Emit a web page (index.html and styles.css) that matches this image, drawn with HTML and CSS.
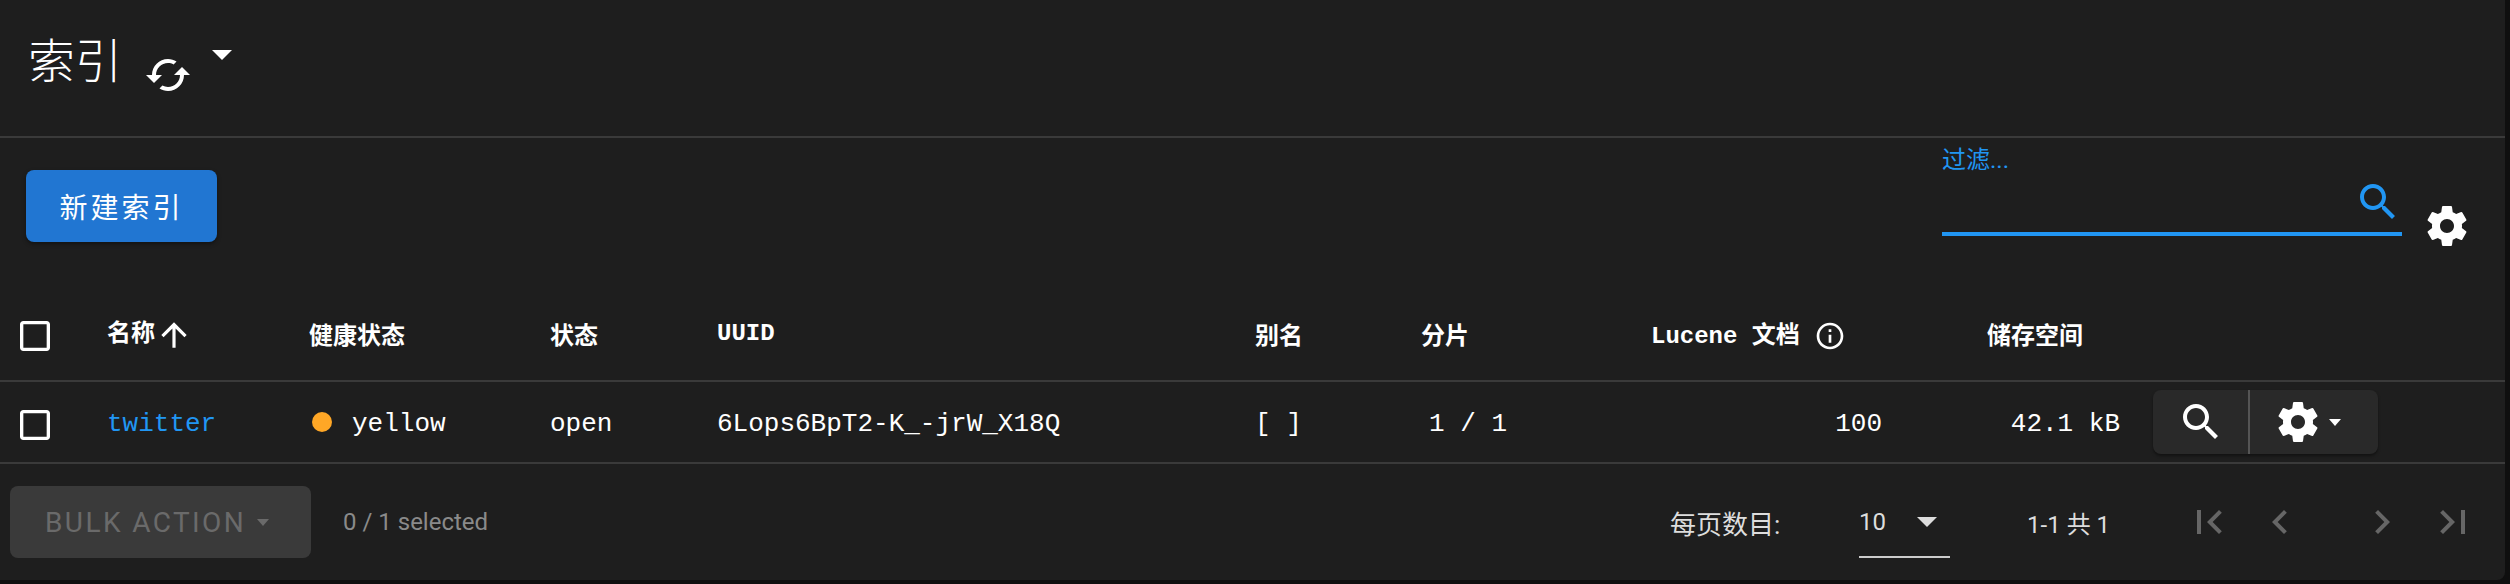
FILE: index.html
```html
<!DOCTYPE html>
<html lang="zh">
   <head>
      <meta charset="UTF-8">
      <title>索引</title>
      <link rel="stylesheet" href="styles.css">
   </head>
   <body>
      <div class="card">
         <header class="title-bar">
            <h1>索引</h1>
            <svg class="icon icon-refresh" viewBox="0 0 24 24"><path d="M19 8l-4 4h3c0 3.31-2.69 6-6 6-1.01 0-1.97-.25-2.8-.7l-1.46 1.46C8.97 19.54 10.43 20 12 20c4.42 0 8-3.58 8-8h3l-4-4zM6 12c0-3.31 2.69-6 6-6 1.01 0 1.97.25 2.8.7l1.46-1.46C15.03 4.46 13.57 4 12 4c-4.42 0-8 3.58-8 8H1l4 4 4-4H6z"/></svg>
            <span class="caret caret-title"></span>
         </header>

         <div class="toolbar">
            <button class="btn-primary">新建索引</button>
            <div class="filter">
               <label>过滤...</label>
               <div class="filter-input">
                  <svg class="icon" viewBox="0 0 24 24"><path d="M15.5 14h-.79l-.28-.27C15.41 12.59 16 11.11 16 9.5 16 5.91 13.09 3 9.5 3S3 5.91 3 9.5 5.91 16 9.5 16c1.61 0 3.09-.59 4.23-1.57l.27.28v.79l5 4.99L20.49 19l-4.99-5zm-6 0C7.01 14 5 11.99 5 9.5S7.01 5 9.5 5 14 7.01 14 9.5 11.99 14 9.5 14z"/></svg>
               </div>
            </div>
            <svg class="icon icon-settings" viewBox="0 0 24 24"><path d="M19.43 12.98c.04-.32.07-.64.07-.98s-.03-.66-.07-.98l2.11-1.65c.19-.15.24-.42.12-.64l-2-3.46c-.12-.22-.39-.3-.61-.22l-2.49 1c-.52-.4-1.08-.73-1.69-.98l-.38-2.65C14.46 2.18 14.25 2 14 2h-4c-.25 0-.46.18-.49.42l-.38 2.65c-.61.25-1.17.59-1.69.98l-2.49-1c-.23-.09-.49 0-.61.22l-2 3.46c-.13.22-.07.49.12.64l2.11 1.65c-.04.32-.07.65-.07.98s.03.66.07.98l-2.11 1.65c-.19.15-.24.42-.12.64l2 3.46c.12.22.39.3.61.22l2.49-1c.52.4 1.08.73 1.69.98l.38 2.65c.03.24.24.42.49.42h4c.25 0 .46-.18.49-.42l.38-2.65c.61-.25 1.17-.59 1.69-.98l2.49 1c.23.09.49 0 .61-.22l2-3.46c.12-.22.07-.49-.12-.64l-2.11-1.65zM12 15.5c-1.93 0-3.5-1.57-3.5-3.5s1.57-3.5 3.5-3.5 3.5 1.57 3.5 3.5-1.57 3.5-3.5 3.5z"/></svg>
         </div>

         <table class="index-table">
            <colgroup>
               <col class="col-check">
               <col class="col-name">
               <col class="col-health">
               <col class="col-state">
               <col class="col-uuid">
               <col class="col-alias">
               <col class="col-shards">
               <col class="col-docs">
               <col class="col-size">
               <col>
            </colgroup>
            <thead>
               <tr>
                  <th class="cell-check"><svg class="icon-check" viewBox="0 0 24 24"><path d="M19 5v14H5V5h14m0-2H5c-1.1 0-2 .9-2 2v14c0 1.1.9 2 2 2h14c1.1 0 2-.9 2-2V5c0-1.1-.9-2-2-2z"/></svg></th>
                  <th>名称<svg class="icon-sort" viewBox="0 0 24 24"><path d="M4 12l1.41 1.41L11 7.83V20h2V7.83l5.58 5.59L20 12l-8-8-8 8z"/></svg></th>
                  <th>健康状态</th>
                  <th>状态</th>
                  <th>UUID</th>
                  <th>别名</th>
                  <th>分片</th>
                  <th>Lucene 文档<svg class="icon-info" viewBox="0 0 24 24"><path d="M11 7h2v2h-2zm0 4h2v6h-2zm1-9C6.48 2 2 6.48 2 12s4.48 10 10 10 10-4.48 10-10S17.52 2 12 2zm0 18c-4.41 0-8-3.59-8-8s3.59-8 8-8 8 3.59 8 8-3.59 8-8 8z"/></svg></th>
                  <th>储存空间</th>
                  <th></th>
               </tr>
            </thead>
            <tbody>
               <tr>
                  <td class="cell-check"><svg class="icon-check" viewBox="0 0 24 24"><path d="M19 5v14H5V5h14m0-2H5c-1.1 0-2 .9-2 2v14c0 1.1.9 2 2 2h14c1.1 0 2-.9 2-2V5c0-1.1-.9-2-2-2z"/></svg></td>
                  <td><a href="#">twitter</a></td>
                  <td><span class="dot"></span>yellow</td>
                  <td>open</td>
                  <td>6Lops6BpT2-K_-jrW_X18Q</td>
                  <td class="cell-alias">[ ]</td>
                  <td class="cell-shards">1 / 1</td>
                  <td class="cell-docs">100</td>
                  <td class="cell-size">42.1 kB</td>
                  <td class="cell-actions">
                     <div class="btn-group">
                        <span class="btn-part part-search"><svg class="icon" viewBox="0 0 24 24"><path d="M15.5 14h-.79l-.28-.27C15.41 12.59 16 11.11 16 9.5 16 5.91 13.09 3 9.5 3S3 5.91 3 9.5 5.91 16 9.5 16c1.61 0 3.09-.59 4.23-1.57l.27.28v.79l5 4.99L20.49 19l-4.99-5zm-6 0C7.01 14 5 11.99 5 9.5S7.01 5 9.5 5 14 7.01 14 9.5 11.99 14 9.5 14z"/></svg></span>
                        <span class="btn-part part-settings"><svg class="icon" viewBox="0 0 24 24"><path d="M19.43 12.98c.04-.32.07-.64.07-.98s-.03-.66-.07-.98l2.11-1.65c.19-.15.24-.42.12-.64l-2-3.46c-.12-.22-.39-.3-.61-.22l-2.49 1c-.52-.4-1.08-.73-1.69-.98l-.38-2.65C14.46 2.18 14.25 2 14 2h-4c-.25 0-.46.18-.49.42l-.38 2.65c-.61.25-1.17.59-1.69.98l-2.49-1c-.23-.09-.49 0-.61.22l-2 3.46c-.13.22-.07.49.12.64l2.11 1.65c-.04.32-.07.65-.07.98s.03.66.07.98l-2.11 1.65c-.19.15-.24.42-.12.64l2 3.46c.12.22.39.3.61.22l2.49-1c.52.4 1.08.73 1.69.98l.38 2.65c.03.24.24.42.49.42h4c.25 0 .46-.18.49-.42l.38-2.65c.61-.25 1.17-.59 1.69-.98l2.49 1c.23.09.49 0 .61-.22l2-3.46c.12-.22.07-.49-.12-.64l-2.11-1.65zM12 15.5c-1.93 0-3.5-1.57-3.5-3.5s1.57-3.5 3.5-3.5 3.5 1.57 3.5 3.5-1.57 3.5-3.5 3.5z"/></svg><span class="caret caret-small"></span></span>
                     </div>
                  </td>
               </tr>
            </tbody>
         </table>

         <footer class="table-footer">
            <button class="btn-bulk">BULK ACTION<span class="caret caret-bulk"></span></button>
            <span class="selected">0 / 1 selected</span>
            <span class="per-page">每页数目:</span>
            <div class="page-select"><span>10</span><span class="caret caret-select"></span></div>
            <span class="page-range">1-1 共 1</span>
            <div class="pager">
               <svg class="icon" viewBox="0 0 24 24"><path d="M18.41 16.59L13.82 12l4.59-4.59L17 6l-6 6 6 6zM6 6h2v12H6z"/></svg>
               <svg class="icon" viewBox="0 0 24 24"><path d="M15.41 7.41L14 6l-6 6 6 6 1.41-1.41L10.83 12z"/></svg>
               <svg class="icon pager-next" viewBox="0 0 24 24"><path d="M10 6L8.59 7.41 13.17 12l-4.58 4.59L10 18l6-6z"/></svg>
               <svg class="icon" viewBox="0 0 24 24"><path d="M5.59 7.41L10.18 12l-4.59 4.59L7 18l6-6-6-6zM16 6h2v12h-2z"/></svg>
            </div>
         </footer>
      </div>
   </body>
</html>
```

FILE: styles.css
```css
body {
margin: 0;
background-color: #0f0f0f;
color: #fff;
font-family: Roboto, "Noto Sans CJK SC", sans-serif;
}
.card {
width: 2505px;
height: 580px;
background-color: #1e1e1e;
border-radius: 0 0 8px 0;
overflow: hidden;
}
.icon {
width: 48px;
height: 48px;
fill: currentColor;
flex: none;
display: block;
}
.caret {
display: block;
width: 0;
height: 0;
border-style: solid;
border-color: currentColor transparent transparent transparent;
}

/* title */
.title-bar {
display: flex;
align-items: flex-start;
height: 136px;
padding-left: 28px;
border-bottom: 2px solid #3a3a3a;
}
h1 {
margin: 30px 0 0 0;
font-size: 47px;
line-height: 64px;
font-weight: 300;
}
.icon-refresh {
margin: 51px 0 0 22px;
}
.caret-title {
margin: 50px 0 0 20px;
border-width: 10px 10px 0 10px;
}

/* toolbar */
.toolbar {
display: flex;
align-items: flex-start;
height: 154px;
padding-left: 26px;
}
.btn-primary {
margin-top: 32px;
width: 191px;
height: 72px;
border: none;
border-radius: 8px;
background-color: #2176d2;
color: #fff;
font-family: "Noto Sans CJK SC", sans-serif;
font-size: 28px;
letter-spacing: 3px;
box-shadow: 0 2px 4px rgba(0, 0, 0, 0.4);
}
.filter {
width: 460px;
margin: 8px 0 0 1725px;
color: #2196f3;
}
.filter label {
display: block;
font-size: 24px;
line-height: 28px;
}
.filter-input {
display: flex;
justify-content: flex-end;
height: 54px;
padding-top: 4px;
border-bottom: 4px solid #2196f3;
}
.icon-settings {
margin: 64px 0 0 21px;
}

/* table */
.index-table {
width: 100%;
table-layout: fixed;
border-collapse: collapse;
font-family: "Liberation Mono", "Noto Sans CJK SC", monospace;
}
.col-check { width: 107px; }
.col-name { width: 202px; }
.col-health { width: 241px; }
.col-state { width: 167px; }
.col-uuid { width: 538px; }
.col-alias { width: 166px; }
.col-shards { width: 230px; }
.col-docs { width: 336px; }
.col-size { width: 166px; }
th, td {
padding: 0;
box-sizing: border-box;
text-align: left;
white-space: nowrap;
border-bottom: 2px solid #3a3a3a;
}
th {
height: 89px;
padding-bottom: 5px;
font-size: 24px;
font-weight: bold;
}
td {
height: 82px;
padding-top: 4px;
font-size: 26px;
}
th.cell-check {
padding: 0 0 0 15px;
}
td.cell-check {
padding: 5px 0 0 15px;
}
.icon-check {
display: block;
width: 40px;
height: 40px;
fill: #fff;
}
.icon-sort {
width: 38px;
height: 38px;
fill: #fff;
vertical-align: middle;
}
.icon-info {
width: 32px;
height: 32px;
margin-left: 14px;
fill: #fff;
vertical-align: middle;
}
td a {
color: #2196f3;
text-decoration: none;
}
.dot {
display: inline-block;
width: 20px;
height: 20px;
margin: 0 20px 0 3px;
border-radius: 50%;
background-color: #ffa726;
vertical-align: -1px;
}
td.cell-alias {
padding-left: 0;
}
.cell-shards {
padding-left: 8px;
}
.cell-docs {
padding-right: 105px;
text-align: right;
}
.cell-size {
padding-right: 33px;
text-align: right;
}
td.cell-actions {
padding: 0;
}
.btn-group {
display: flex;
width: 225px;
height: 64px;
border-radius: 8px;
background-color: #292929;
box-shadow: 0 2px 3px rgba(0, 0, 0, 0.4);
}
.btn-part {
display: flex;
align-items: center;
}
.part-search {
width: 97px;
padding-left: 24px;
box-sizing: border-box;
border-right: 2px solid #555;
}
.part-settings {
padding-left: 24px;
}
.caret-small {
margin-left: 7px;
border-width: 7px 6px 0 6px;
}

/* footer */
.table-footer {
display: flex;
align-items: center;
height: 116px;
padding-left: 10px;
}
.btn-bulk {
display: flex;
align-items: center;
width: 301px;
height: 72px;
padding: 0 0 0 35px;
border: none;
border-radius: 8px;
background-color: #3a3a3a;
color: #6a6a6a;
font-family: Roboto, sans-serif;
font-size: 28px;
letter-spacing: 2.4px;
}
.caret-bulk {
margin-left: 11px;
border-width: 7px 6.5px 0 6.5px;
}
.selected {
margin-left: 32px;
color: #8a8a8a;
font-size: 24px;
}
.per-page {
margin-left: 1182px;
width: 189px;
color: #ddd;
font-size: 26px;
}
.page-select {
display: flex;
align-items: center;
width: 91px;
height: 70px;
border-bottom: 2px solid #ccc;
box-sizing: border-box;
margin-top: 1px;
font-size: 24px;
color: #ddd;
}
.caret-select {
margin-left: 31px;
border-width: 10px 10.5px 0 10.5px;
}
.page-range {
margin-left: 77px;
width: 158px;
color: #ddd;
font-size: 24px;
}
.pager {
display: flex;
gap: 23px;
color: #666;
}
.pager-next {
margin-left: 31px;
}
```
